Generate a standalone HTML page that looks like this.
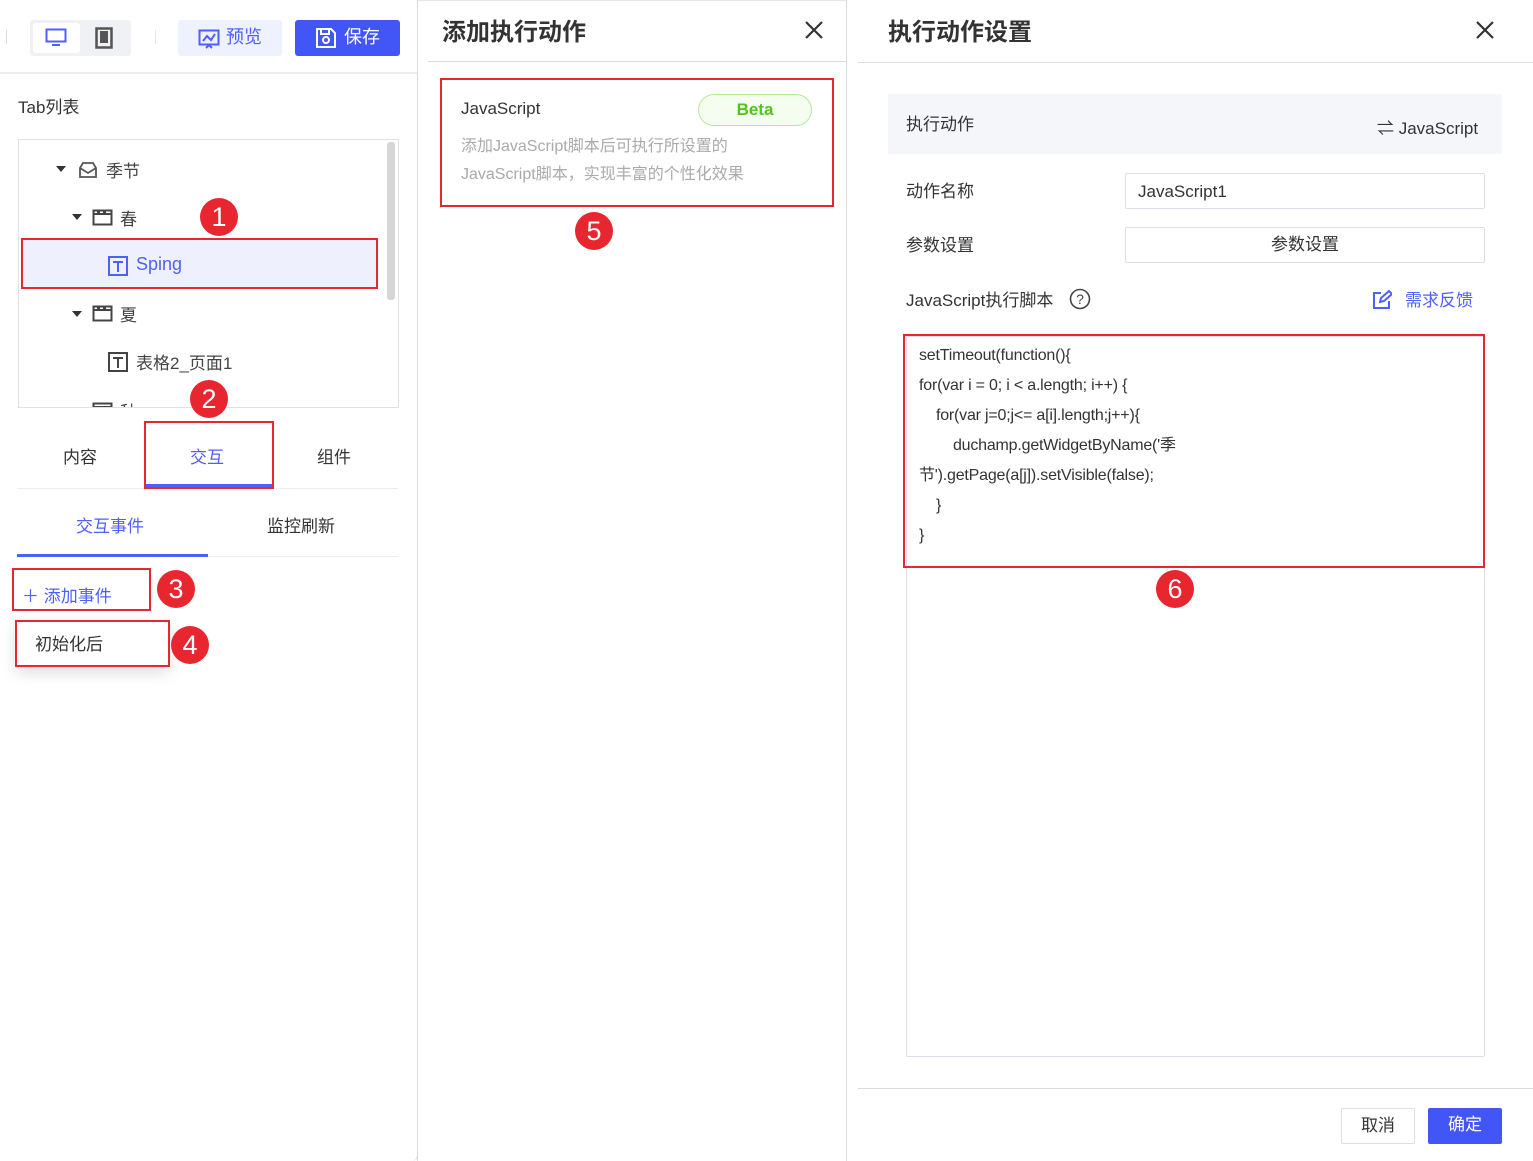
<!DOCTYPE html>
<html><head><meta charset="utf-8">
<style>
*{box-sizing:border-box;margin:0;padding:0}
body{width:1533px;height:1161px;background:#fff;position:relative;overflow:hidden;font-family:"Liberation Sans","Noto Sans CJK SC",sans-serif;color:#333;font-size:16px}
.a{position:absolute}
.red{position:absolute;border:2px solid #e8262f}
.num{position:absolute;width:38px;height:38px;border-radius:50%;background:#e8262f;color:#fff;font-size:27px;text-align:center;line-height:38px}
.blue{color:#4f5fff}
</style></head><body>

<!-- LEFT PANEL -->
<div class="a" style="left:0;top:0;width:418px;height:1161px;border-right:1px solid #d8dbe0;border-radius:0 0 6px 0"></div>
<div class="a" style="left:0;top:72px;width:417px;height:2px;background:#eceef2"></div>
<div class="a" style="left:6px;top:30px;width:1px;height:14px;background:#ddd"></div>
<div class="a" style="left:30px;top:20px;width:101px;height:36px;background:#f0f1f4;border-radius:3px"></div>
<div class="a" style="left:33px;top:23px;width:47px;height:30px;background:#fff;border-radius:3px"></div>
<svg class="a" style="left:45px;top:28px" width="22" height="20"><rect x="1.5" y="1.5" width="19" height="12" fill="none" stroke="#4f5fff" stroke-width="2"/><rect x="7" y="16" width="8" height="2" fill="#4f5fff"/></svg>
<svg class="a" style="left:95px;top:27px" width="18" height="22"><rect x="1.5" y="1.5" width="15" height="19" fill="none" stroke="#555" stroke-width="2.5"/><rect x="5" y="4" width="8" height="12" fill="#555"/></svg>
<div class="a" style="left:155px;top:30px;width:1px;height:14px;background:#e5e5e5"></div>
<div class="a" style="left:178px;top:20px;width:104px;height:36px;background:#eef1fe;border-radius:3px;color:#4f5fff;font-size:18px;line-height:34px;padding-left:48px">预览</div>
<svg class="a" style="left:198px;top:29px" width="22" height="20"><rect x="1.5" y="1.5" width="19" height="14" fill="none" stroke="#4f5fff" stroke-width="2"/><path d="M5 12l4-5 4 4 4-6" fill="none" stroke="#4f5fff" stroke-width="2"/><path d="M8 19l3-3 3 3" stroke="#4f5fff" stroke-width="2" fill="none"/></svg>
<div class="a" style="left:295px;top:20px;width:105px;height:36px;background:#4255f7;border-radius:3px;color:#fff;font-size:18px;line-height:34px;padding-left:49px">保存</div>
<svg class="a" style="left:315px;top:27px" width="22" height="22"><path d="M2 2h14l4 4v14H2z" fill="none" stroke="#fff" stroke-width="2"/><rect x="6" y="2" width="8" height="5" fill="none" stroke="#fff" stroke-width="2"/><circle cx="11" cy="13" r="3" fill="none" stroke="#fff" stroke-width="2"/></svg>

<div class="a" style="left:18px;top:93px;font-size:17px">Tab列表</div>
<div class="a" style="left:18px;top:139px;width:381px;height:269px;border:1px solid #dfe1e6;overflow:hidden">
  <div class="a" style="left:368px;top:2px;width:8px;height:158px;background:#d6d6d6;border-radius:3px"></div>
  <svg class="a" style="left:73px;top:262px" width="22" height="17"><path d="M1.5 1.5h18v14h-18z" fill="none" stroke="#444" stroke-width="2"/><path d="M1.5 5h18" stroke="#444" stroke-width="2"/></svg>
  <div class="a" style="left:101px;top:258px;font-size:17px;color:#444">秋</div>
</div>
<div class="a" style="left:56px;top:166px;width:0;height:0;border-left:5px solid transparent;border-right:5px solid transparent;border-top:6px solid #333"></div>
<svg class="a" style="left:78px;top:161px" width="20" height="18"><path d="M2 7l3-5h10l3 5v9H2z" fill="none" stroke="#555" stroke-width="1.8"/><path d="M2 7l8 5 8-5" fill="none" stroke="#555" stroke-width="1.8"/></svg>
<div class="a" style="left:106px;top:157px;font-size:17px;color:#444">季节</div>
<div class="a" style="left:72px;top:214px;border-left:5px solid transparent;border-right:5px solid transparent;border-top:6px solid #333"></div>
<svg class="a" style="left:92px;top:209px" width="22" height="17"><path d="M1.5 1.5h18v14h-18z" fill="none" stroke="#444" stroke-width="2"/><path d="M1.5 5h18" stroke="#444" stroke-width="2"/><rect x="5" y="1" width="3" height="3" fill="#444"/><rect x="11" y="1" width="3" height="3" fill="#444"/></svg>
<div class="a" style="left:120px;top:205px;font-size:17px;color:#444">春</div>
<div class="a" style="left:22px;top:240px;width:354px;height:47px;background:#eef1fd"></div>
<svg class="a" style="left:108px;top:256px" width="20" height="20"><rect x="1" y="1" width="18" height="18" fill="none" stroke="#4f5fff" stroke-width="2"/><path d="M5 6h10M10 6v10" stroke="#4f5fff" stroke-width="2"/></svg>
<div class="a blue" style="left:136px;top:254px;font-size:18px">Sping</div>
<div class="red" style="left:21px;top:238px;width:357px;height:51px"></div>
<div class="a" style="left:72px;top:311px;border-left:5px solid transparent;border-right:5px solid transparent;border-top:6px solid #333"></div>
<svg class="a" style="left:92px;top:305px" width="22" height="17"><path d="M1.5 1.5h18v14h-18z" fill="none" stroke="#444" stroke-width="2"/><path d="M1.5 5h18" stroke="#444" stroke-width="2"/><rect x="5" y="1" width="3" height="3" fill="#444"/><rect x="11" y="1" width="3" height="3" fill="#444"/></svg>
<div class="a" style="left:120px;top:301px;font-size:17px;color:#444">夏</div>
<svg class="a" style="left:108px;top:352px" width="20" height="20"><rect x="1" y="1" width="18" height="18" fill="none" stroke="#444" stroke-width="2"/><path d="M5 6h10M10 6v10" stroke="#444" stroke-width="2"/></svg>
<div class="a" style="left:136px;top:349px;font-size:17px;color:#444">表格2_页面1</div>
<div class="num" style="left:200px;top:198px">1</div>
<div class="num" style="left:190px;top:380px">2</div>

<div class="a" style="left:63px;top:443px;font-size:17px">内容</div>
<div class="a blue" style="left:190px;top:443px;font-size:17px">交互</div>
<div class="a" style="left:317px;top:443px;font-size:17px">组件</div>
<div class="a" style="left:17px;top:488px;width:381px;height:1px;background:#eceef2"></div>
<div class="a" style="left:146px;top:484px;width:126px;height:3px;background:#4f5fff"></div>
<div class="red" style="left:144px;top:421px;width:130px;height:68px"></div>

<div class="a blue" style="left:76px;top:512px;font-size:17px">交互事件</div>
<div class="a" style="left:267px;top:512px;font-size:17px">监控刷新</div>
<div class="a" style="left:17px;top:556px;width:381px;height:1px;background:#eceef2"></div>
<div class="a" style="left:17px;top:554px;width:191px;height:3px;background:#4f5fff"></div>

<div class="a blue" style="left:22px;top:582px;font-size:17px">＋ 添加事件</div>
<div class="red" style="left:12px;top:568px;width:139px;height:43px"></div>
<div class="num" style="left:157px;top:570px">3</div>
<div class="a" style="left:16px;top:620px;width:153px;height:46px;background:#fff;box-shadow:0 6px 16px rgba(0,0,0,.15)"></div>
<div class="a" style="left:35px;top:630px;font-size:17px">初始化后</div>
<div class="red" style="left:15px;top:620px;width:155px;height:47px"></div>
<div class="num" style="left:171px;top:626px">4</div>

<!-- MIDDLE PANEL -->
<div class="a" style="left:417px;top:0;width:430px;height:1161px;border-left:1px solid #d8dbe0;border-right:1px solid #d8dbe0;border-top:1px solid #e5e5e5"></div>
<div class="a" style="left:442px;top:12px;font-size:24px;color:#333;font-weight:bold">添加执行动作</div>
<svg class="a" style="left:804px;top:20px" width="20" height="20"><path d="M2 2l16 16M18 2L2 18" stroke="#333" stroke-width="2.2"/></svg>
<div class="a" style="left:428px;top:61px;width:418px;height:1px;background:#dcdcdc"></div>
<div class="a" style="left:461px;top:99px;font-size:17px;color:#333">JavaScript</div>
<div class="a" style="left:698px;top:94px;width:114px;height:32px;border:1.5px solid #b5eb9a;background:#f4fdef;border-radius:16px;color:#52c41a;font-size:17px;font-weight:bold;text-align:center;line-height:30px">Beta</div>
<div class="a" style="left:461px;top:133px;font-size:16px;color:#aaa;line-height:28px">添加JavaScript脚本后可执行所设置的<br>JavaScript脚本，实现丰富的个性化效果</div>
<div class="red" style="left:440px;top:78px;width:394px;height:129px"></div>
<div class="num" style="left:575px;top:212px">5</div>

<!-- RIGHT PANEL -->
<div class="a" style="left:888px;top:12px;font-size:24px;color:#333;font-weight:bold">执行动作设置</div>
<svg class="a" style="left:1475px;top:20px" width="20" height="20"><path d="M2 2l16 16M18 2L2 18" stroke="#333" stroke-width="2.2"/></svg>
<div class="a" style="left:858px;top:62px;width:675px;height:1px;background:#dcdcdc"></div>
<div class="a" style="left:888px;top:94px;width:614px;height:60px;background:#f4f6f9"></div>
<div class="a" style="left:906px;top:110px;font-size:17px">执行动作</div>
<div class="a" style="left:1377px;top:114px;font-size:17px">⇌ JavaScript</div>
<div class="a" style="left:906px;top:177px;font-size:17px">动作名称</div>
<div class="a" style="left:1125px;top:173px;width:360px;height:36px;border:1px solid #dcdfe6;border-radius:2px;font-size:17px;line-height:36px;padding-left:12px">JavaScript1</div>
<div class="a" style="left:906px;top:231px;font-size:17px">参数设置</div>
<div class="a" style="left:1125px;top:227px;width:360px;height:36px;border:1px solid #dcdfe6;border-radius:2px;font-size:17px;line-height:34px;text-align:center">参数设置</div>
<div class="a" style="left:906px;top:286px;font-size:17px">JavaScript执行脚本</div>
<svg class="a" style="left:1069px;top:288px" width="22" height="22"><circle cx="11" cy="11" r="9.5" fill="none" stroke="#444" stroke-width="1.6"/><text x="11" y="16" font-size="14" text-anchor="middle" fill="#444" font-family="Liberation Sans">?</text></svg>
<svg class="a" style="left:1372px;top:290px" width="20" height="20"><path d="M9 3H2v15h15v-7" fill="none" stroke="#4f5fff" stroke-width="2"/><path d="M8 12l1-4 8-7 3 3-8 7z" fill="none" stroke="#4f5fff" stroke-width="2"/></svg>
<div class="a blue" style="left:1405px;top:286px;font-size:17px">需求反馈</div>
<div class="a" style="left:906px;top:336px;width:579px;height:721px;border:1px solid #dcdfe6;border-radius:2px"></div>
<div class="a" style="left:919px;top:341px;font-size:16px;line-height:30px;color:#333;white-space:pre;letter-spacing:-0.2px">setTimeout(function(){
for(var i = 0; i &lt; a.length; i++) {
    for(var j=0;j&lt;= a[i].length;j++){
        duchamp.getWidgetByName('季
节').getPage(a[j]).setVisible(false);
    }
}</div>
<div class="red" style="left:903px;top:334px;width:582px;height:234px"></div>
<div class="num" style="left:1156px;top:570px">6</div>
<div class="a" style="left:858px;top:1088px;width:675px;height:1px;background:#dcdcdc"></div>
<div class="a" style="left:1341px;top:1108px;width:74px;height:36px;border:1px solid #dcdfe6;border-radius:2px;font-size:17px;text-align:center;line-height:34px">取消</div>
<div class="a" style="left:1428px;top:1108px;width:74px;height:36px;background:#4255f7;border-radius:2px;font-size:17px;text-align:center;line-height:34px;color:#fff">确定</div>
</body></html>
